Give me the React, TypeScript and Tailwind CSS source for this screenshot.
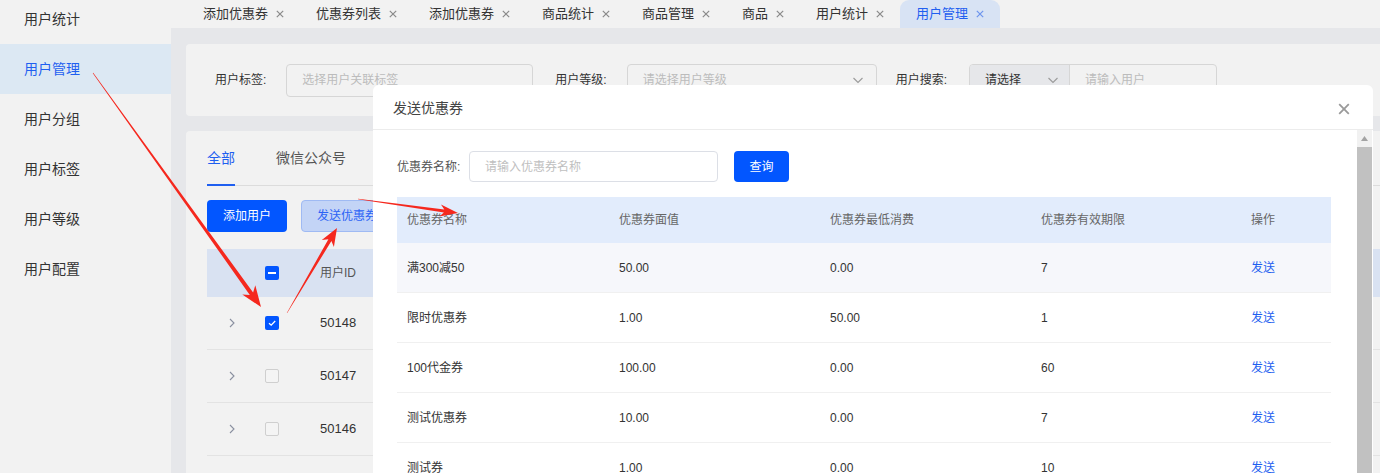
const tabs = [
  { title: "添加优惠券" },
  { title: "优惠券列表" },
  { title: "添加优惠券" },
  { title: "商品统计" },
  { title: "商品管理" },
  { title: "商品" },
  { title: "用户统计" },
  { title: "用户管理", active: true },
];

const menu = ["用户统计", "用户管理", "用户分组", "用户标签", "用户等级", "用户配置"];

const coupons = [
  ["满300减50", "50.00", "0.00", "7"],
  ["限时优惠券", "1.00", "50.00", "1"],
  ["100代金券", "100.00", "0.00", "60"],
  ["测试优惠券", "10.00", "0.00", "7"],
  ["测试券", "1.00", "0.00", "10"],
];

const users = [
  { id: "50148", checked: true },
  { id: "50147", checked: false },
  { id: "50146", checked: false },
];

function Cross({ color = "#8a8a8a", size = 8 }: { color?: string; size?: number }) {
  return (
    <svg width={size} height={size} viewBox="0 0 8 8" fill="none">
      <path d="M0.8 0.8L7.2 7.2M7.2 0.8L0.8 7.2" stroke={color} strokeWidth="1.2" />
    </svg>
  );
}

function Chevron() {
  return (
    <svg width="12" height="12" viewBox="0 0 12 12" fill="none">
      <path d="M1.5 4L6 8.5L10.5 4" stroke="#9a9a9a" strokeWidth="1.1" />
    </svg>
  );
}

function arrowPoints(
  x1: number,
  y1: number,
  x2: number,
  y2: number,
  w0: number,
  w1: number,
  headLen: number,
  headHalf: number
) {
  const dx = x2 - x1;
  const dy = y2 - y1;
  const len = Math.hypot(dx, dy);
  const ux = dx / len;
  const uy = dy / len;
  const nx = -uy;
  const ny = ux;
  const bx = x2 - headLen * ux;
  const by = y2 - headLen * uy;
  const kx = x2 - headLen * 0.78 * ux;
  const ky = y2 - headLen * 0.78 * uy;
  const pts = [
    [x1 + (w0 / 2) * nx, y1 + (w0 / 2) * ny],
    [kx + (w1 / 2) * nx, ky + (w1 / 2) * ny],
    [bx + headHalf * nx, by + headHalf * ny],
    [x2, y2],
    [bx - headHalf * nx, by - headHalf * ny],
    [kx - (w1 / 2) * nx, ky - (w1 / 2) * ny],
    [x1 - (w0 / 2) * nx, y1 - (w0 / 2) * ny],
  ];
  return pts.map((p) => `${p[0].toFixed(1)},${p[1].toFixed(1)}`).join(" ");
}

export default function App() {
  return (
    <div className="relative flex h-[473px] w-[1380px] overflow-hidden bg-[#e6e7ea] font-['Liberation_Sans','Noto_Sans_CJK_SC',sans-serif] text-[#333]">
      {/* sidebar */}
      <aside className="w-[171px] shrink-0 bg-[#f2f2f2]">
        <div className="-mt-[6px]">
          {menu.map((m, i) => (
            <div
              key={m}
              className={
                i === 1
                  ? "flex h-[50px] items-center bg-[#dce8f3] pl-[24px] text-[14px] text-[#1f5ff0]"
                  : "flex h-[50px] items-center pl-[24px] text-[14px] text-[#333]"
              }
            >
              {m}
            </div>
          ))}
        </div>
      </aside>

      <div className="flex min-w-0 flex-1 flex-col">
        {/* tab bar */}
        <div className="flex h-[28px] shrink-0 items-end bg-[#f2f2f2] pl-[16px]">
          {tabs.map((t, i) => (
            <div
              key={i}
              className={
                t.active
                  ? "flex h-[28px] items-center gap-[8px] rounded-t-[9px] bg-[#d8e3f4] px-[16px] text-[13px] text-[#1f5ff0]"
                  : "flex h-[28px] items-center gap-[8px] px-[16px] text-[13px] text-[#333]"
              }
            >
              <span>{t.title}</span>
              <Cross color={t.active ? "#6d95ee" : "#8a8a8a"} />
            </div>
          ))}
        </div>

        <div className="pl-[15px]">
          {/* filter card */}
          <div className="mt-[16px] flex h-[72px] w-[1240px] items-center rounded-[4px] bg-[#f2f2f2] pl-[29px] text-[12px]">
            <span className="text-[#333]">用户标签:</span>
            <div className="ml-[20px] flex h-[33px] w-[247px] items-center rounded-[4px] border border-[#d6d6d6] pl-[15px] text-[#bcbcbc]">
              选择用户关联标签
            </div>
            <span className="ml-[22px] text-[#333]">用户等级:</span>
            <div className="ml-[20px] flex h-[33px] w-[250px] items-center justify-between rounded-[4px] border border-[#d6d6d6] pl-[15px] pr-[12px] text-[#bcbcbc]">
              请选择用户等级
              <Chevron />
            </div>
            <span className="ml-[19px] text-[#333]">用户搜索:</span>
            <div className="ml-[22px] flex h-[33px] w-[248px] overflow-hidden rounded-[4px] border border-[#d6d6d6]">
              <div className="flex w-[100px] items-center justify-between border-r border-[#d6d6d6] bg-[#e6e7ea] pl-[15px] pr-[10px] text-[#333]">
                请选择
                <Chevron />
              </div>
              <div className="flex flex-1 items-center pl-[15px] text-[#bcbcbc]">请输入用户</div>
            </div>
          </div>

          {/* list card */}
          <div className="mt-[15px] h-[400px] w-[1240px] rounded-[4px] bg-[#f2f2f2] pl-[21px]">
            <div className="flex h-[55px] items-stretch gap-[41px] border-b border-[#dcdcdc] text-[14px]">
              <div className="relative flex items-center text-[#1f5ff0]">
                全部
                <span className="absolute bottom-[-1px] left-0 h-[2px] w-full bg-[#1f5ff0]" />
              </div>
              <div className="flex items-center text-[#555]">微信公众号</div>
            </div>
            <div className="mt-[14px] flex gap-[14px] text-[12px]">
              <div className="flex h-[32px] w-[80px] items-center justify-center rounded-[4px] bg-[#0256ff] text-white">
                添加用户
              </div>
              <div className="flex h-[32px] w-[92px] items-center justify-center rounded-[4px] border border-[#9fbaf3] bg-[#c3d4f6] text-[#2c63f5]">
                发送优惠券
              </div>
            </div>
            <div className="mt-[17px] text-[12px]">
              <div className="flex h-[48px] items-center bg-[#d9e2f2]">
                <div className="w-[50px]" />
                <div className="w-[63px] pl-[8px]">
                  <div className="flex h-[14px] w-[14px] items-center justify-center rounded-[2px] bg-[#0256ff]">
                    <div className="h-[2px] w-[8px] bg-white" />
                  </div>
                </div>
                <span className="text-[#555]">用户ID</span>
              </div>
              {users.map((u) => (
                <div key={u.id} className="flex h-[53px] items-center border-b border-[#e3e3e3]">
                  <div className="flex w-[50px] justify-center">
                    <svg width="6" height="10" viewBox="0 0 6 10" fill="none">
                      <path d="M1 1L5 5L1 9" stroke="#8a90a0" strokeWidth="1.1" />
                    </svg>
                  </div>
                  <div className="w-[63px] pl-[8px]">
                    {u.checked ? (
                      <div className="flex h-[14px] w-[14px] items-center justify-center rounded-[2px] bg-[#0256ff]">
                        <svg width="10" height="10" viewBox="0 0 10 10" fill="none">
                          <path d="M2 5.2L4.2 7.2L8.2 3" stroke="white" strokeWidth="1.3" />
                        </svg>
                      </div>
                    ) : (
                      <div className="h-[14px] w-[14px] rounded-[2px] border border-[#cfcfcf] bg-[#f4f4f4]" />
                    )}
                  </div>
                  <span className="text-[13px] text-[#333]">{u.id}</span>
                </div>
              ))}
            </div>
          </div>
        </div>
      </div>

      {/* modal */}
      <div className="absolute left-[373px] top-[85px] flex h-[400px] w-[1000px] flex-col rounded-t-[6px] bg-white">
        <div className="flex h-[45px] shrink-0 items-center justify-between border-b border-[#ececec] pl-[20px] pr-[23px] pt-[3px]">
          <span className="text-[14px] text-[#444]">发送优惠券</span>
          <Cross color="#9a9a9a" size={12} />
        </div>
        <div className="flex min-h-0 flex-1">
          <div className="flex-1 pl-[24px] pr-[26px] pt-[21px] text-[12px]">
            <div className="flex h-[31px] items-center">
              <span className="w-[72px] text-[#555]">优惠券名称:</span>
              <div className="flex h-[31px] w-[249px] items-center rounded-[4px] border border-[#dcdfe6] pl-[15px] text-[#bfbfbf]">
                请输入优惠券名称
              </div>
              <div className="ml-[16px] flex h-[31px] w-[55px] items-center justify-center rounded-[4px] bg-[#0256ff] text-white">
                查询
              </div>
            </div>
            <div className="mt-[15px]">
              <div className="flex h-[46px] items-center bg-[#e2ecfc] text-[#666]">
                <div className="w-[212px] pl-[10px]">优惠券名称</div>
                <div className="w-[211px] pl-[10px]">优惠券面值</div>
                <div className="w-[211px] pl-[10px]">优惠券最低消费</div>
                <div className="w-[210px] pl-[10px]">优惠券有效期限</div>
                <div className="flex-1 pl-[10px]">操作</div>
              </div>
              {coupons.map((c, i) => (
                <div
                  key={i}
                  className={
                    i === 0
                      ? "flex h-[50px] items-center border-b border-[#f0f0f0] bg-[#f6f7fb] text-[#333]"
                      : "flex h-[50px] items-center border-b border-[#f0f0f0] text-[#333]"
                  }
                >
                  <div className="w-[212px] pl-[10px]">{c[0]}</div>
                  <div className="w-[211px] pl-[10px]">{c[1]}</div>
                  <div className="w-[211px] pl-[10px]">{c[2]}</div>
                  <div className="w-[210px] pl-[10px]">{c[3]}</div>
                  <div className="flex-1 pl-[10px] text-[#1f5ff0]">发送</div>
                </div>
              ))}
            </div>
          </div>
          <div className="mr-[1px] flex w-[15px] flex-col bg-[#f1f1f1]">
            <div className="flex h-[17px] items-center justify-center">
              <svg width="7" height="5" viewBox="0 0 7 5">
                <path d="M3.5 0L7 5H0Z" fill="#a3a3a3" />
              </svg>
            </div>
            <div className="flex-1 bg-[#c1c1c1]" />
          </div>
        </div>
      </div>

      {/* annotation arrows */}
      <svg className="pointer-events-none absolute left-0 top-0" width="1380" height="473">
        <polygon points={arrowPoints(93, 73, 261, 307, 0.6, 4, 21, 8)} fill="#f5281e" />
        <polygon points={arrowPoints(287, 313, 337, 228, 0.5, 3.5, 18, 7)} fill="#f5281e" />
        <polygon points={arrowPoints(358, 199, 458, 213, 0.5, 3, 18, 6)} fill="#f5281e" />
      </svg>
    </div>
  );
}
